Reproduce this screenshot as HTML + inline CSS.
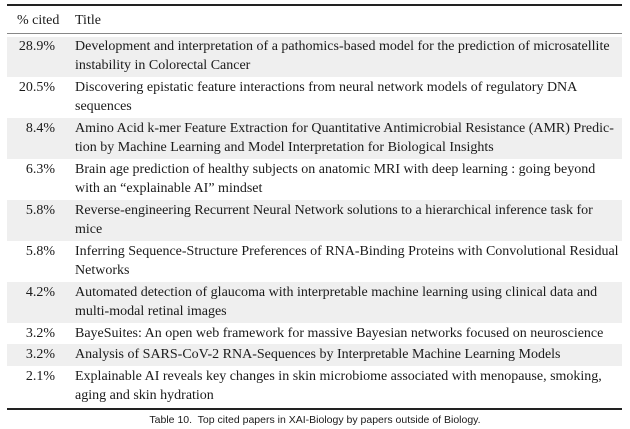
<!DOCTYPE html>
<html><head><style>
body{margin:0;width:630px;height:429px;background:#fff;position:relative;font-family:"Liberation Serif",serif;font-size:14px;color:#1a1a1a;overflow:hidden}
.rule{position:absolute;left:7px;width:615px}
.row{position:absolute;left:7px;width:615px}
.row.s{background:#efefef}
.p{position:absolute;right:567px;top:1px;white-space:nowrap;line-height:19.5px}
.t{position:absolute;left:68px;top:1px;white-space:nowrap;line-height:19.5px}
.cap{position:absolute;top:412px;left:0;width:630px;text-align:center;font-family:"Liberation Sans",sans-serif;font-size:10.5px;line-height:16px}
</style></head><body>
<div class="rule" style="top:4px;height:1.5px;background:#222"></div>
<div class="row" style="top:10px;height:22px"><div class="p" style="left:10px;right:auto;top:1px">% cited</div><div class="t">Title</div></div>
<div class="rule" style="top:33px;height:1px;background:#888"></div>

<div class="row s" style="top:36.5px;height:40px"><div class="p" style="top:0">28.9%</div><div class="t" style="top:0">Development and interpretation of a pathomics-based model for the prediction of microsatellite<br>instability in Colorectal Cancer</div></div>
<div class="row" style="top:76.5px;height:41px"><div class="p">20.5%</div><div class="t">Discovering epistatic feature interactions from neural network models of regulatory DNA<br>sequences</div></div>
<div class="row s" style="top:117.5px;height:41px"><div class="p">8.4%</div><div class="t">Amino Acid k-mer Feature Extraction for Quantitative Antimicrobial Resistance (AMR) Predic-<br>tion by Machine Learning and Model Interpretation for Biological Insights</div></div>
<div class="row" style="top:158.5px;height:41px"><div class="p">6.3%</div><div class="t">Brain age prediction of healthy subjects on anatomic MRI with deep learning : going beyond<br>with an “explainable AI” mindset</div></div>
<div class="row s" style="top:199.5px;height:41px"><div class="p">5.8%</div><div class="t">Reverse-engineering Recurrent Neural Network solutions to a hierarchical inference task for<br>mice</div></div>
<div class="row" style="top:240.5px;height:41px"><div class="p">5.8%</div><div class="t">Inferring Sequence-Structure Preferences of RNA-Binding Proteins with Convolutional Residual<br>Networks</div></div>
<div class="row s" style="top:281.5px;height:41px"><div class="p">4.2%</div><div class="t">Automated detection of glaucoma with interpretable machine learning using clinical data and<br>multi-modal retinal images</div></div>
<div class="row" style="top:322.5px;height:21.5px"><div class="p">3.2%</div><div class="t">BayeSuites: An open web framework for massive Bayesian networks focused on neuroscience</div></div>
<div class="row s" style="top:344px;height:21.5px"><div class="p">3.2%</div><div class="t">Analysis of SARS-CoV-2 RNA-Sequences by Interpretable Machine Learning Models</div></div>
<div class="row" style="top:365.5px;height:41px"><div class="p">2.1%</div><div class="t">Explainable AI reveals key changes in skin microbiome associated with menopause, smoking,<br>aging and skin hydration</div></div>
<div class="rule" style="top:408px;height:1.5px;background:#222"></div>
<div class="cap">Table 10.&nbsp; Top cited papers in XAI-Biology by papers outside of Biology.</div>
</body></html>
